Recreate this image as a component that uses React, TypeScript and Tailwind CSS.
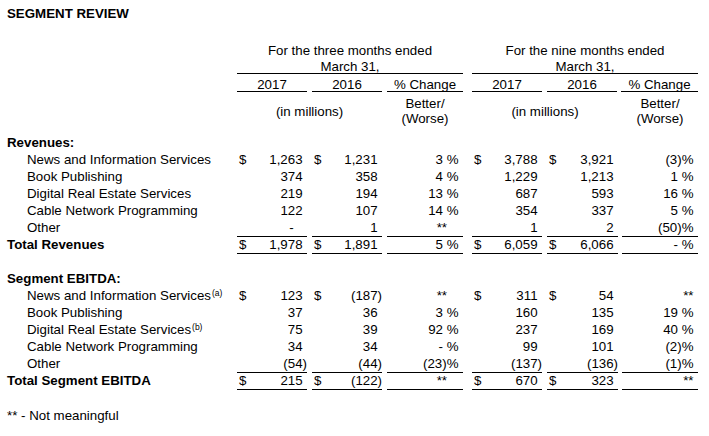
import React from 'react';

// column widths / gaps, measured off the printed table
const COLS = [
  'w-[70px]',
  'ml-[5px] w-[70px]',
  'ml-[5px] w-[76px]',
  'ml-[9px] w-[70px]',
  'ml-[5px] w-[71px]',
  'ml-[4px] w-[76px]',
];

type Row = { label: string; note?: string; vals: string[]; line?: boolean; total?: boolean };

const revenues: Row[] = [
  { label: 'News and Information Services', vals: ['$1,263', '$1,231', '3 %', '$3,788', '$3,921', '(3)%'] },
  { label: 'Book Publishing', vals: ['374', '358', '4 %', '1,229', '1,213', '1 %'] },
  { label: 'Digital Real Estate Services', vals: ['219', '194', '13 %', '687', '593', '16 %'] },
  { label: 'Cable Network Programming', vals: ['122', '107', '14 %', '354', '337', '5 %'] },
  { label: 'Other', vals: ['-', '1', '**', '1', '2', '(50)%'], line: true },
  { label: 'Total Revenues', vals: ['$1,978', '$1,891', '5 %', '$6,059', '$6,066', '- %'], line: true, total: true },
];

const ebitda: Row[] = [
  { label: 'News and Information Services', note: '(a)', vals: ['$123', '$(187)', '**', '$311', '$54', '**'] },
  { label: 'Book Publishing', vals: ['37', '36', '3 %', '160', '135', '19 %'] },
  { label: 'Digital Real Estate Services', note: '(b)', vals: ['75', '39', '92 %', '237', '169', '40 %'] },
  { label: 'Cable Network Programming', vals: ['34', '34', '- %', '99', '101', '(2)%'] },
  { label: 'Other', vals: ['(54)', '(44)', '(23)%', '(137)', '(136)', '(1)%'], line: true },
  { label: 'Total Segment EBITDA', vals: ['$215', '$(122)', '**', '$670', '$323', '**'], line: true, total: true },
];

const Value = ({ raw, col }: { raw: string; col: number }) => {
  // percent columns
  if (col === 2 || col === 5) {
    let pad = 'pr-[4.5px]';
    if (raw === '**' && col === 2) pad = 'pr-[16px]';
    return <div className={`text-right whitespace-pre ${pad}`}>{raw}</div>;
  }
  const dollar = raw.startsWith('$');
  const v = dollar ? raw.slice(1) : raw;
  const neg = v.endsWith(')');
  return (
    <div className="flex justify-between whitespace-pre">
      <span className="pl-[2px]">{dollar ? '$' : ''}</span>
      <span className={v === '-' ? 'pr-[9px]' : ''}>
        {v}
        {!neg && <span className="invisible">)</span>}
      </span>
    </div>
  );
};

const TableRow = ({ row }: { row: Row }) => (
  <div className="flex">
    <div
      className={`w-[230px] leading-[16px] border-b border-transparent whitespace-nowrap ${
        row.total ? 'font-bold' : 'pl-[20px]'
      }`}
    >
      {row.label}
      {row.note && <sup className="text-[8.5px] ml-px">{row.note}</sup>}
    </div>
    {row.vals.map((v, i) => (
      <div
        key={i}
        className={`${COLS[i]} leading-[16px] border-b ${row.line ? 'border-black' : 'border-transparent'}`}
      >
        <Value raw={v} col={i} />
      </div>
    ))}
  </div>
);

const SectionHead = ({ title }: { title: string }) => (
  <div className="h-[17px] leading-[16px] font-bold">{title}</div>
);

const PeriodHeader = ({ title, first }: { title: string; first: boolean }) => (
  <div className={`${first ? '' : 'ml-[9px]'} w-[226px] flex flex-col`}>
    <div className="leading-[18px] text-center">{title}</div>
    <div className="leading-[13px] text-center border-b border-black">March 31,</div>
    <div className="flex mt-[5px]">
      <div className="w-[70px] leading-[12px] text-center border-b border-black">2017</div>
      <div className="ml-[5px] w-[70px] leading-[12px] text-center border-b border-black">2016</div>
      <div className={`${first ? 'ml-[5px] w-[76px]' : 'ml-[4px] w-[77px]'} leading-[12px] text-center border-b border-black`}>
        % Change
      </div>
    </div>
    <div className="flex mt-[4px] items-center h-[30px]">
      <div className={`${first ? 'w-[145px]' : 'w-[146px]'} leading-[15px] text-center`}>(in millions)</div>
      <div className={`${first ? 'ml-[5px] w-[76px]' : 'ml-[4px] w-[76px]'} leading-[15px] text-center`}>
        Better/
        <br />
        (Worse)
      </div>
    </div>
  </div>
);

export default function App() {
  return (
    <div className="w-[709px] h-[436px] bg-white text-black pl-[7px] font-['Liberation_Sans',Arial,sans-serif] text-[13.3px] overflow-hidden">
      <div className="pt-[6px] leading-[16px] font-bold">SEGMENT REVIEW</div>

      <div className="flex mt-[20px]">
        <div className="w-[230px]" />
        <PeriodHeader title="For the three months ended" first />
        <PeriodHeader title="For the nine months ended" first={false} />
      </div>

      <div className="mt-[9px]">
        <SectionHead title="Revenues:" />
        {revenues.map((r) => (
          <TableRow key={r.label} row={r} />
        ))}
        <div className="h-[17px]" />
        <SectionHead title="Segment EBITDA:" />
        {ebitda.map((r) => (
          <TableRow key={r.label} row={r} />
        ))}
      </div>

      <div className="mt-[18px] leading-[16px]">** - Not meaningful</div>
    </div>
  );
}
